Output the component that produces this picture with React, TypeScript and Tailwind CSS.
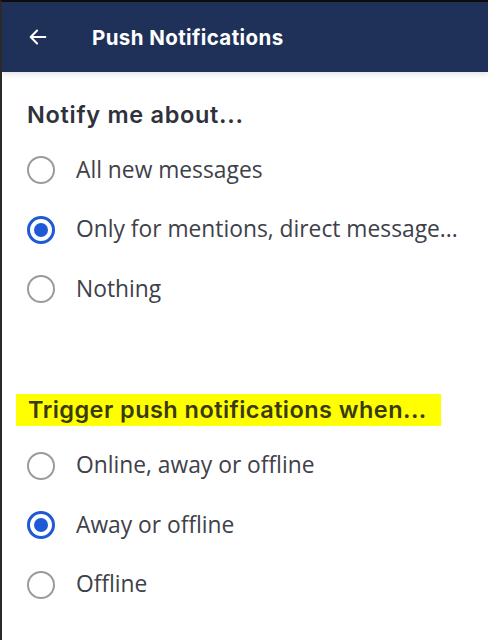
import { useState } from 'react'

const notifyOptions = ['All new messages', 'Only for mentions, direct message...', 'Nothing']
const triggerOptions = ['Online, away or offline', 'Away or offline', 'Offline']

function Radio({ checked }: { checked: boolean }) {
	return checked ? (
		<span className="flex h-[28px] w-[28px] shrink-0 items-center justify-center rounded-full border-[3px] border-[#1f5ad6]">
			<span className="h-[14px] w-[14px] rounded-full bg-[#1f5ad6]" />
		</span>
	) : (
		<span className="h-[28px] w-[28px] shrink-0 rounded-full border-2 border-[#9b9b9b]" />
	)
}

function OptionList({
	options,
	value,
	onChange
}: {
	options: string[]
	value: number
	onChange: (i: number) => void
}) {
	return (
		<div className="flex flex-col">
			{options.map((label, i) => (
				<button
					key={i}
					type="button"
					onClick={() => onChange(i)}
					className="flex h-[59.5px] items-center gap-[21px] text-left">
					<Radio checked={value === i} />
					<span className="font-['Open_Sans',sans-serif] text-[22.8px] text-[#3e4149]">{label}</span>
				</button>
			))}
		</div>
	)
}

export default function App() {
	const [notify, setNotify] = useState(1)
	const [trigger, setTrigger] = useState(1)

	return (
		<div className="flex h-[640px] w-[488px] flex-col overflow-hidden border-l-2 border-t-2 border-l-[#2a2a2a] border-t-[#0d0d0d] bg-white">
			{/* Header */}
			<div className="relative z-10 flex h-[70px] shrink-0 items-center bg-[#1f3159] pl-[25px] shadow-[0_2px_6px_rgba(0,0,0,0.12)]">
				<svg width="22" height="22" viewBox="0 0 24 24" fill="none" stroke="white" strokeWidth="2.2" strokeLinecap="round" strokeLinejoin="round">
					<path d="M20 12H4M11 5l-7 7 7 7" />
				</svg>
				<h1 className="ml-[43px] mt-[2px] font-['Inter',sans-serif] text-[20.5px] font-bold tracking-[0.4px] text-white">
					Push Notifications
				</h1>
			</div>

			<div className="flex flex-col pl-[25px]">
				<h2 className="mt-[25px] mb-[8px] font-['Inter',sans-serif] text-[23.5px] font-semibold tracking-[0.7px] text-[#2f323a]">
					Notify me about...
				</h2>
				<OptionList options={notifyOptions} value={notify} onChange={setNotify} />

				<div className="mt-[75px] -ml-[11px] mr-[47px] mb-[10px] bg-[#ffff00] py-[4px] pl-[12px]">
					<h2 className="font-['Inter',sans-serif] text-[23.5px] font-semibold leading-[24px] tracking-[0.45px] text-[#3a3a10]">
						Trigger push notifications when...
					</h2>
				</div>
				<OptionList options={triggerOptions} value={trigger} onChange={setTrigger} />
			</div>
		</div>
	)
}
